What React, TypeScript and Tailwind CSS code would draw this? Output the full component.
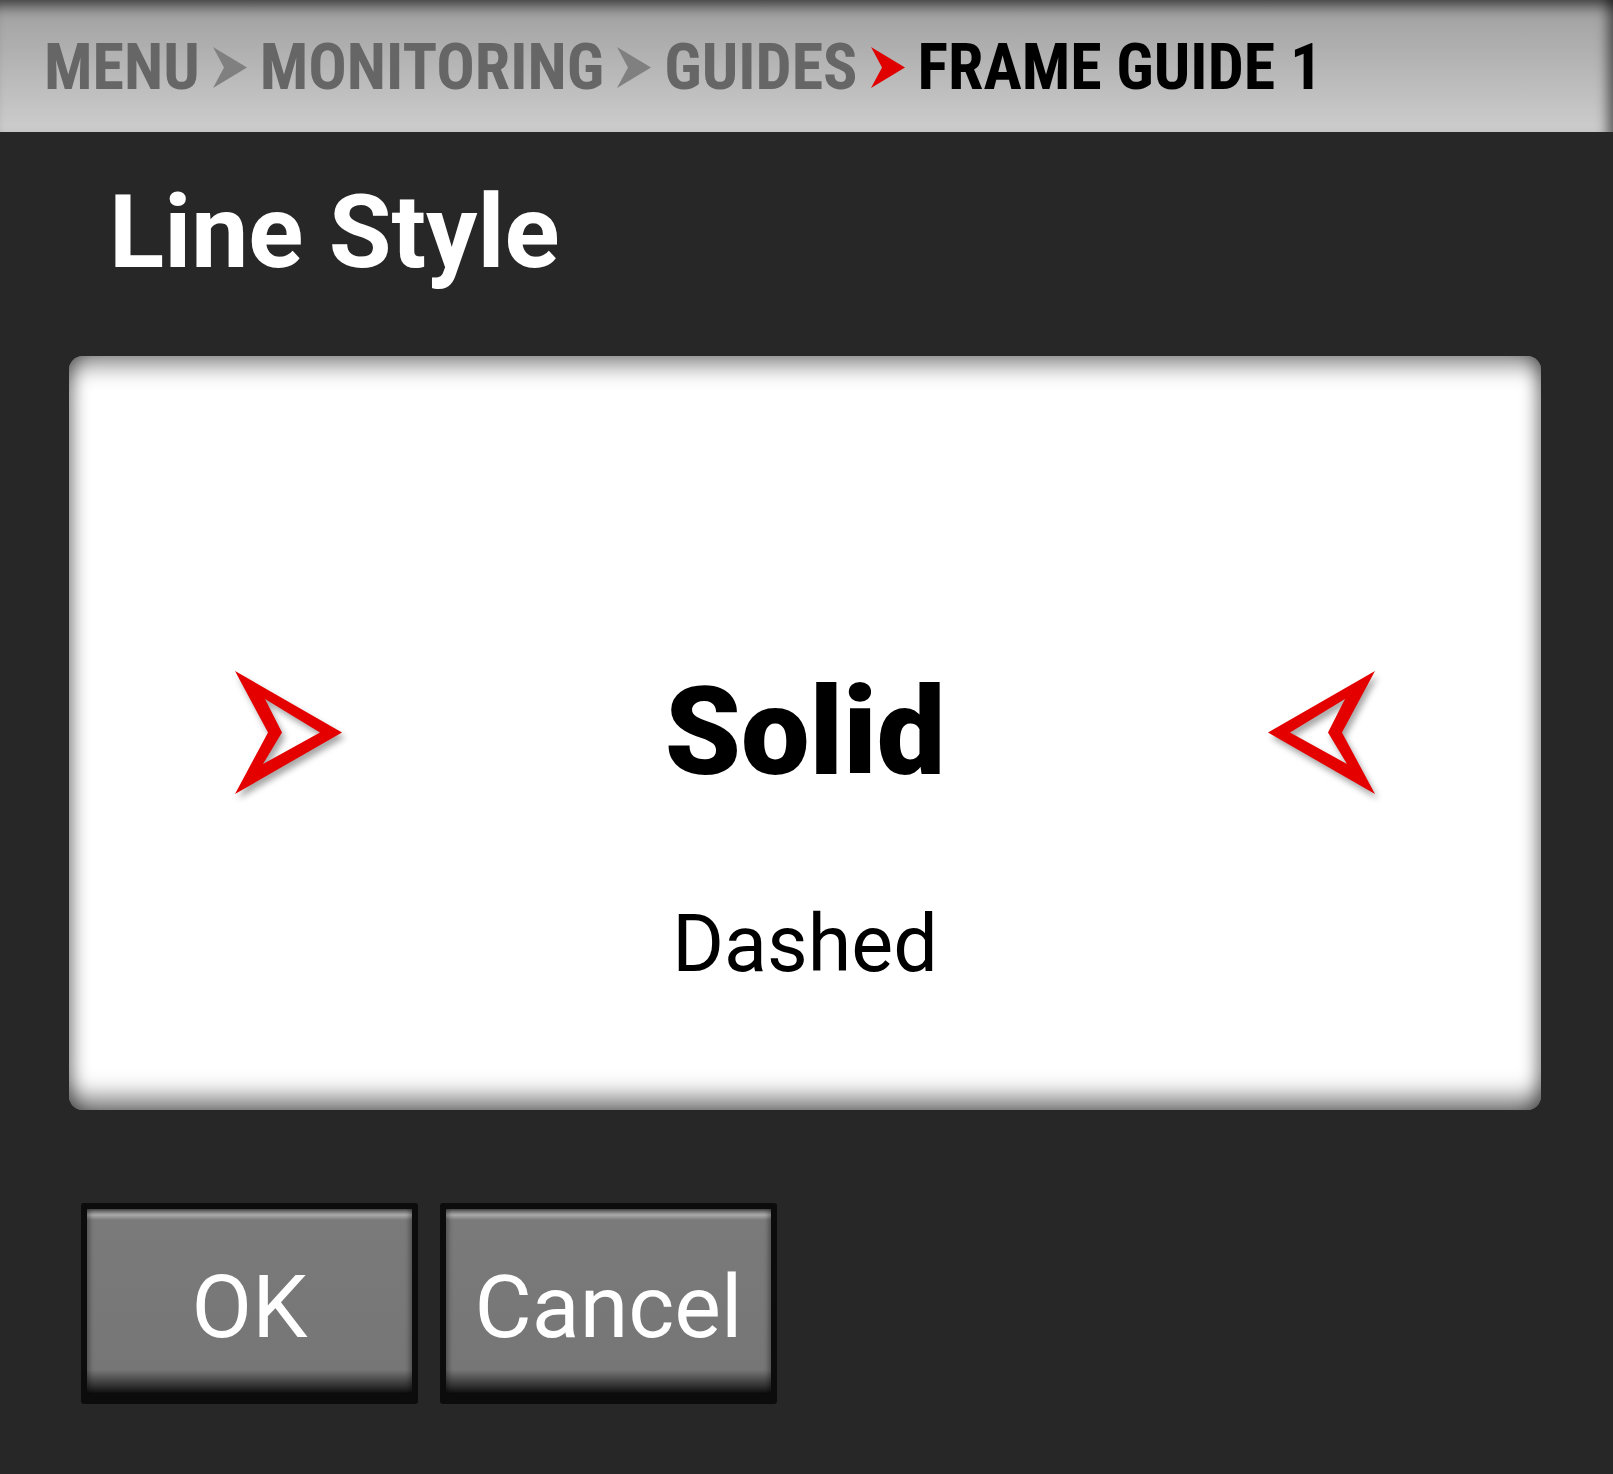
const crumbs = ['MENU', 'MONITORING', 'GUIDES']

function Chevron({ color }: { color: string }) {
  return (
    <svg width="34" height="41" viewBox="0 0 34 41" className="shrink-0">
      <polygon points="0,0 34,20.5 0,41 11,20.5" fill={color} />
    </svg>
  )
}

function PickArrow({ flip }: { flip?: boolean }) {
  const d = flip
    ? 'M108 0 L1 61.5 L108 123 L75 61.5 Z M78 28 L23 61.5 L80 93 L61 61.5 Z'
    : 'M0 0 L107 61.5 L0 123 L33 61.5 Z M30 28 L85 61.5 L28 93 L47 61.5 Z'
  return (
    <svg
      width="108"
      height="124"
      viewBox="0 0 108 124"
      className="shrink-0 overflow-visible drop-shadow-[3px_5px_3px_rgba(0,0,0,0.35)]"
    >
      <path d={d} fill="#e50000" fillRule="evenodd" />
    </svg>
  )
}

function Button({ label }: { label: string }) {
  return (
    <div className="h-[201px] w-[337px] rounded-[3px] bg-[#0c0c0c] px-[6px] pt-[6px] pb-[10px]">
      <div className="flex h-full items-center justify-center bg-[linear-gradient(to_bottom,#5c5c5c_0px,#aaaaaa_6px,#7a7a7a_11px,#767676_87%,#363636_95%,#0e0e0e_100%)] pt-[10px] text-[88px] leading-none text-white shadow-[inset_3px_0_4px_rgba(0,0,0,0.3),inset_-3px_0_4px_rgba(0,0,0,0.3)]">
        {label}
      </div>
    </div>
  )
}

export default function App() {
  return (
    <div className="min-h-[1474px] bg-[#272727] font-[Roboto,'Noto_Sans',sans-serif]">
      <header className="flex h-[132px] items-center gap-[13px] bg-[linear-gradient(to_bottom,#9e9e9e,#cdcdcd)] pt-[3px] pl-[44px] shadow-[inset_0_16px_14px_-10px_rgba(0,0,0,0.6),inset_-14px_0_12px_-8px_rgba(0,0,0,0.5)]">
        {crumbs.map((c) => (
          <div key={c} className="flex items-center gap-[13px]">
            <span className="font-['Roboto_Condensed','Liberation_Sans_Narrow',Roboto,sans-serif] text-[64px] leading-none font-bold text-[#666666] [font-stretch:85%]">
              {c}
            </span>
            <Chevron color={c === 'GUIDES' ? '#e00000' : '#808080'} />
          </div>
        ))}
        <span className="font-['Roboto_Condensed','Liberation_Sans_Narrow',Roboto,sans-serif] text-[64px] leading-none font-bold text-black [font-stretch:85%]">
          FRAME GUIDE 1
        </span>
      </header>

      <h1 className="mt-[49px] ml-[109px] text-[102px] leading-none font-bold text-white">Line Style</h1>

      <div className="mt-[73px] ml-[69px] grid h-[754px] w-[1472px] grid-rows-[1fr_auto_1fr] rounded-[14px] bg-white shadow-[inset_0_24px_22px_-14px_rgba(0,0,0,0.45),inset_0_-26px_24px_-14px_rgba(0,0,0,0.55),inset_16px_0_16px_-10px_rgba(0,0,0,0.35),inset_-16px_0_16px_-10px_rgba(0,0,0,0.35)]">
        <div />
        <div className="flex items-center justify-between px-[166px]">
          <PickArrow />
          <span className="text-[122px] leading-none font-black text-black">Solid</span>
          <PickArrow flip />
        </div>
        <div className="pt-[110px] text-center text-[79px] leading-none text-black">Dashed</div>
      </div>

      <div className="mt-[93px] ml-[81px] flex gap-[22px]">
        <Button label="OK" />
        <Button label="Cancel" />
      </div>
    </div>
  )
}
